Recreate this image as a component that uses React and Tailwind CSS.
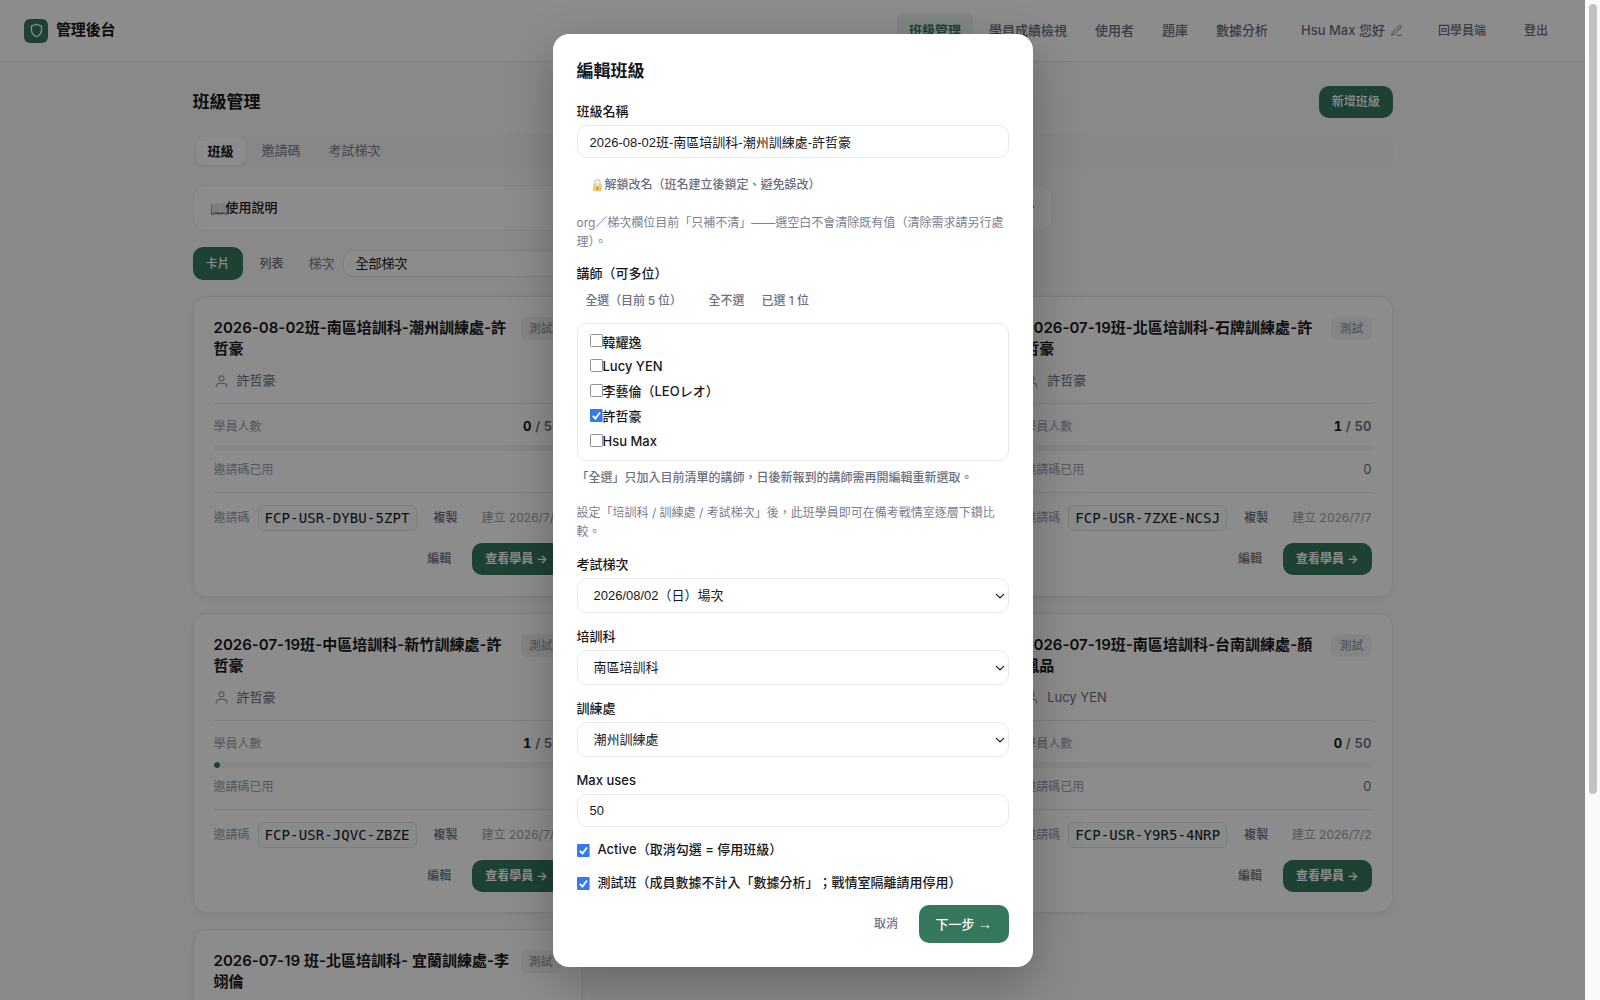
const cards = [
  { title: '2026-08-02班-南區培訓科-潮州訓練處-許哲豪', teacher: '許哲豪', count: 0, bar: 0, code: 'FCP-USR-DYBU-5ZPT', date: '2026/7/7' },
  null,
  { title: '2026-07-19班-北區培訓科-石牌訓練處-許哲豪', teacher: '許哲豪', count: 1, bar: 2, code: 'FCP-USR-7ZXE-NCSJ', date: '2026/7/7' },
  { title: '2026-07-19班-中區培訓科-新竹訓練處-許哲豪', teacher: '許哲豪', count: 1, bar: 2, code: 'FCP-USR-JQVC-ZBZE', date: '2026/7/7' },
  null,
  { title: '2026-07-19班-南區培訓科-台南訓練處-顏鳳品', teacher: 'Lucy YEN', count: 0, bar: 0, code: 'FCP-USR-Y9R5-4NRP', date: '2026/7/2' },
  { title: '2026-07-19 班-北區培訓科- 宜蘭訓練處-李翊倫' },
];

const teachers = ['韓耀逸', 'Lucy YEN', '李藝倫（LEOレオ）', '許哲豪', 'Hsu Max'];

function Card({ c }) {
  if (!c) {
    return <article className="h-[300.6px] rounded-[14px] border border-[#ebebee] bg-white" />;
  }
  return (
    <article className="h-[300.6px] rounded-[14px] border border-[#ebebee] bg-white p-5 shadow-[0_2px_8px_rgba(0,0,0,0.06)]">
      <div className="flex h-[42px] items-start justify-between gap-2">
        <h3 className="w-[298px] text-[15px] leading-[21px] font-semibold tracking-[0.03px] text-[#18181b]">{c.title}</h3>
        <span className="h-[23px] shrink-0 rounded-md bg-[#f3f3f5] px-2 text-xs leading-[23px] text-[#8b90a0]">測試</span>
      </div>
      {c.code && (
        <>
          <div className="mt-[12px] flex h-5 items-center gap-2 text-[13px] text-[#6b7080]">
            <svg className="size-[15px] text-[#9ca0b0]" viewBox="0 0 24 24" fill="none" stroke="currentColor" strokeWidth="1.8" strokeLinecap="round">
              <circle cx="12" cy="7" r="4" />
              <path d="M3.5 21v-1a5 5 0 0 1 5-5h7a5 5 0 0 1 5 5v1" />
            </svg>
            {c.teacher}
          </div>
          <div className="mt-[12px] border-t border-[#e6e6ea] pt-3">
            <div className="flex h-[22px] items-center justify-between text-xs text-[#9ca0ad]">
              <span>學員人數</span>
              <span className="text-[13px] font-semibold tabular-nums tracking-[0.1px] text-[#6b7080]"><b className="font-bold text-[#18181b]">{c.count}</b> / 50</span>
            </div>
            <div className="mt-[7px] h-1.5 overflow-hidden rounded-full bg-[#f5f5f7]">
              <div className="h-full rounded-full bg-[#35785d]" style={{ width: `${c.bar}%` }} />
            </div>
            <div className="mt-[9px] flex h-5 items-center justify-between text-xs text-[#9ca0ad]">
              <span>邀請碼已用</span>
              <span className="text-[13px] text-[#6b7080]">0</span>
            </div>
          </div>
          <div className="mt-[12px] flex items-center border-t border-[#e6e6ea] pt-[12px] text-xs text-[#9ca0ad]">
            <span>邀請碼</span>
            <code className="ml-2 h-[26px] rounded-md border border-[#dfe7e4] bg-[#fafcfb] px-[6px] font-['DejaVu_Sans_Mono',monospace] text-[14px] leading-6 tracking-[0.1px] text-[#18181b]">{c.code}</code>
            <span className="ml-[17px] font-medium text-[#6b7080]">複製</span>
            <span className="ml-auto">建立 {c.date}</span>
          </div>
          <div className="mt-[12.4px] flex items-center justify-end text-xs">
            <span className="mr-[21px] font-medium text-[#6b7080]">編輯</span>
            <button className="h-8 rounded-[10px] bg-[#35785d] px-[13px] font-semibold text-white">查看學員 →</button>
          </div>
        </>
      )}
    </article>
  );
}

function Check({ on = false, className = '' }) {
  return (
    <span role="checkbox" aria-checked={on} className={`block size-[13px] shrink-0 ${className}`}>
      <svg className="size-[13px]" viewBox="0 0 13 13" fill="none">
        {on ? (
          <>
            <rect width="12.6" height="13" rx="1" fill="#3478f6" />
            <path d="m2.8 6.8 2.6 2.7 4.6-6" stroke="white" strokeWidth="1.9" />
          </>
        ) : (
          <rect x=".5" y=".5" width="12" height="12" rx="1" fill="white" stroke="#858585" strokeWidth=".9" />
        )}
      </svg>
    </span>
  );
}

function Label({ children, className = '' }) {
  return <div className={`h-5 text-[13px] leading-5 font-medium text-[#18181b] ${className}`}>{children}</div>;
}

function Select({ value }) {
  return (
    <div className="mt-1 flex h-[35px] items-center justify-between rounded-[10px] border border-[#e9e9ec] bg-white pr-[3px] pl-4 font-['Liberation_Sans','Noto_Sans_CJK_TC',sans-serif] text-[13px] text-[#18181b]">
      <span>{value}</span>
      <svg className="h-[6px] w-[10px]" viewBox="0 0 10 6" fill="none" stroke="currentColor" strokeWidth="1.2"><path d="m1 .9 4 4 4-4" /></svg>
    </div>
  );
}

function Dialog() {
  return (
    <section className="h-[933px] w-[480px] rounded-2xl bg-white p-6 text-[#18181b] shadow-[0_16px_48px_rgba(0,0,0,0.25)]">
      <h2 className="h-[26px] text-[17px] leading-[26px] font-semibold">編輯班級</h2>
      <Label className="mt-[17px]">班級名稱</Label>
      <input readOnly value="2026-08-02班-南區培訓科-潮州訓練處-許哲豪" className="mt-[4.5px] block h-[33px] w-full rounded-[10px] border border-[#e9e9ec] px-3 font-['Liberation_Sans','Noto_Sans_CJK_TC',sans-serif] text-[13px]" />
      <div className="mt-[16.5px] ml-[13px] flex h-5 items-center text-xs font-medium text-[#6b7080]"><span className="opacity-60">🔒</span>解鎖改名（班名建立後鎖定、避免誤改）</div>
      <p className="mt-[18.2px] text-xs leading-[19px] text-[#7b8092]">org／梯次欄位目前「只補不清」——選空白不會清除既有值（清除需求請另行處理）。</p>
      <Label className="mt-[12px]">講師（可多位）</Label>
      <div className="mt-[8px] flex h-5 items-center pl-[9px] text-xs font-medium text-[#6b7080]">
        <span className="w-[123px] tracking-[-0.15px]">全選（目前 5 位）</span>
        <span className="w-[53px]">全不選</span>
        <span>已選 1 位</span>
      </div>
      <div className="mt-[12px] h-[138px] rounded-[10px] border border-[#e9e9ec] px-3 pt-[6.3px]">
        {teachers.map((t) => (
          <label key={t} className="flex h-[24.8px] items-center text-[13px] font-medium">
            <Check on={t === '許哲豪'} className="mb-[3px]" />
            {t}
          </label>
        ))}
      </div>
      <p className="mt-[7px] text-xs leading-5 font-medium text-[#6b7080]">「全選」只加入目前清單的講師，日後新報到的講師需再開編輯重新選取。</p>
      <p className="mt-[15.8px] text-xs leading-[19px] text-[#7b8092]">設定「培訓科 / 訓練處 / 考試梯次」後，此班學員即可在備考戰情室逐層下鑽比較。</p>
      <Label className="mt-[12.7px]">考試梯次</Label>
      <Select value="2026/08/02（日）場次" />
      <Label className="mt-[13px]">培訓科</Label>
      <Select value="南區培訓科" />
      <Label className="mt-[13px]">訓練處</Label>
      <Select value="潮州訓練處" />
      <Label className="mt-[12.7px]">Max uses</Label>
      <input readOnly value="50" className="mt-1 block h-[33px] w-full rounded-[10px] border border-[#e9e9ec] px-3 font-['Liberation_Sans',sans-serif] text-[13px]" />
      <label className="mt-[13.3px] flex h-5 items-center gap-2 text-[13px] font-medium">
        <Check on />Active（取消勾選 = 停用班級）
      </label>
      <label className="mt-[13px] flex h-5 items-center gap-2 text-[13px] font-medium [text-spacing-trim:space-all]">
        <Check on />測試班（成員數據不計入「數據分析」；戰情室隔離請用停用）
      </label>
      <div className="mt-[12px] flex items-center justify-end text-xs font-medium">
        <span className="mr-[21px] text-[#6b7080]">取消</span>
        <button className="h-[37.5px] w-[89.5px] rounded-[10px] bg-[#35785d] text-[13px] leading-5 text-white">下一步 <span className="font-['Liberation_Sans',sans-serif] text-[14px] leading-none">→</span></button>
      </div>
    </section>
  );
}

export default function App() {
  return (
    <div className="relative flex h-[1000px] overflow-hidden bg-[#fafafa] font-['Inter','Noto_Sans_CJK_TC',sans-serif]">
      <div className="w-[1585px] shrink-0">
        <header className="flex h-[62px] items-center border-b border-[#e6e6ea] bg-white px-6">
          <div className="flex size-6 items-center justify-center rounded-md bg-[#35785d]">
            <svg className="size-[15px] text-white" viewBox="0 0 24 24" fill="none" stroke="currentColor" strokeWidth="2" strokeLinejoin="round">
              <path d="M12 22s8-4 8-10V5l-8-3-8 3v7c0 6 8 10 8 10z" />
            </svg>
          </div>
          <span className="ml-2 text-[15px] font-semibold tracking-[-0.15px] text-[#18181b]">管理後台</span>
          <nav className="ml-auto flex items-center gap-1 text-[13px] font-medium text-[#6b7080]">
            <span className="rounded-md bg-[#e9f4ef] px-3 pt-[7px] pb-[9px] leading-5 font-semibold text-[#35785d]">班級管理</span>
            <span className="px-3">學員成績檢視</span>
            <span className="px-3">使用者</span>
            <span className="px-3">題庫</span>
            <span className="px-3">數據分析</span>
          </nav>
          <div className="ml-[21px] flex w-[111px] items-center text-[13px] font-medium text-[#6b7080]">
            <span className="whitespace-nowrap">Hsu Max 您好</span>
            <svg className="ml-[5px] size-[13px] shrink-0 text-[#9ca0b0]" viewBox="0 0 24 24" fill="none" stroke="currentColor" strokeWidth="2" strokeLinecap="round" strokeLinejoin="round">
              <path d="M13 21h9M17 3.5a2.1 2.1 0 0 1 3.2 3L7 19.5l-4 1 1-4z" />
            </svg>
          </div>
          <span className="ml-[26px] text-xs font-medium text-[#6b7080]">回學員端</span>
          <span className="mr-[13px] ml-[38px] text-xs font-medium text-[#6b7080]">登出</span>
        </header>
        <main className="mx-auto w-[1200px] pt-6">
          <div className="flex h-8 items-center justify-between">
            <h1 className="mt-0.5 text-[17px] font-semibold text-[#18181b]">班級管理</h1>
            <button className="h-8 rounded-[10px] bg-[#35785d] px-[12.75px] text-xs font-medium text-white">新增班級</button>
          </div>
          <div className="mt-4 flex h-[35px] items-center gap-1 rounded-[10px] bg-[#f6f6f7] px-[3px] pb-px text-[13px] text-[#7b8092]">
            <span className="rounded-lg bg-white px-3 py-1 leading-5 font-semibold text-[#18181b] shadow-[0_1px_3px_rgba(0,0,0,0.06)]">班級</span>
            <span className="px-3">邀請碼</span>
            <span className="px-3">考試梯次</span>
          </div>
          <div className="mt-4 flex h-[46px] w-[860px] items-center rounded-xl border border-[#f0f0f2] bg-white px-4 text-[13px] font-medium text-[#18181b]">
            <span className="flex w-4 items-center text-[15px] leading-none">📖</span>使用說明
            <svg className="ml-auto size-3 text-[#6b7080]" viewBox="0 0 12 12" fill="none" stroke="currentColor" strokeWidth="1.5"><path d="m2 4 4 4 4-4" /></svg>
          </div>
          <div className="mt-4 flex h-[33px] items-center text-xs">
            <button className="h-[33px] rounded-[10px] bg-[#35785d] px-[13px] font-medium text-white">卡片</button>
            <span className="ml-[17px] font-medium text-[#6b7080]">列表</span>
            <span className="ml-[25px] text-[13px] text-[#7b8092]">梯次</span>
            <div className="ml-2 flex h-[27px] w-[240px] items-center rounded-[10px] border border-[#e6e6ea] bg-white px-3 text-[13px] text-[#18181b]">全部梯次</div>
          </div>
          <div className="mt-4 grid grid-cols-3 gap-4">
            {cards.map((c, i) => <Card key={i} c={c} />)}
          </div>
        </main>
      </div>
      <div className="absolute inset-y-0 left-0 flex w-[1585px] items-center justify-center bg-black/45">
        <Dialog />
      </div>
      <div className="flex-1 bg-[#fafafa] pt-1 pl-1">
        <div className="h-[790px] w-2 rounded-full bg-[#c1c1c1]" />
      </div>
    </div>
  );
}
